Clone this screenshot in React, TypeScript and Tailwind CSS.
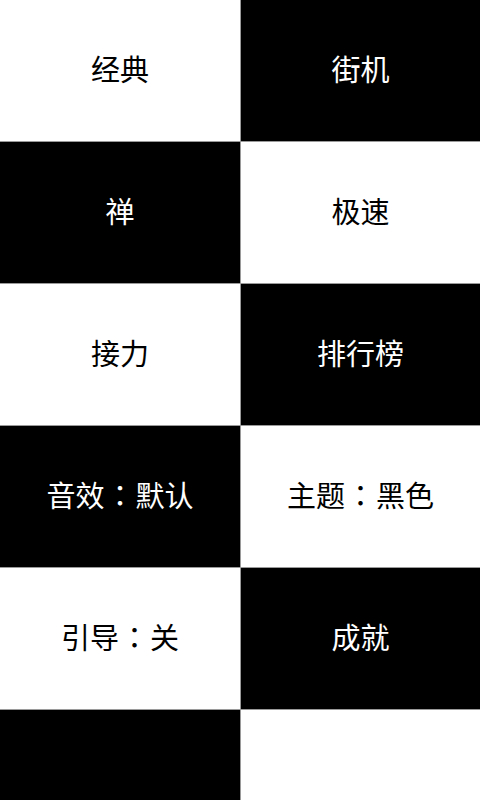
import React from "react";

const cells: { label: string; dark: boolean }[] = [
  { label: "经典", dark: false },
  { label: "街机", dark: true },
  { label: "禅", dark: true },
  { label: "极速", dark: false },
  { label: "接力", dark: false },
  { label: "排行榜", dark: true },
  { label: "音效：默认", dark: true },
  { label: "主题：黑色", dark: false },
  { label: "引导：关", dark: false },
  { label: "成就", dark: true },
  { label: "", dark: true },
  { label: "", dark: false },
];

function Label({ text }: { text: string }) {
  const parts = text.split("：");
  if (parts.length < 2) return <span>{text}</span>;
  return (
    <span>
      {parts[0]}
      <span className="font-['Noto_Sans_CJK_TC',sans-serif] px-[1px]">：</span>
      {parts[1]}
    </span>
  );
}

export default function App() {
  return (
    <div className="w-[480px] h-[800px] overflow-hidden bg-[#9a9a9a] font-['Noto_Sans_CJK_SC','Noto_Sans',sans-serif]">
      <div className="grid grid-cols-[240px_239px] auto-rows-[141px] gap-px">
        {cells.map((c, i) => (
          <div
            key={i}
            className={
              c.dark
                ? "bg-black text-white flex items-center justify-center text-[29px] pb-[4px]"
                : "bg-white text-black flex items-center justify-center text-[29px] pb-[4px]"
            }
          >
            <Label text={c.label} />
          </div>
        ))}
      </div>
    </div>
  );
}
